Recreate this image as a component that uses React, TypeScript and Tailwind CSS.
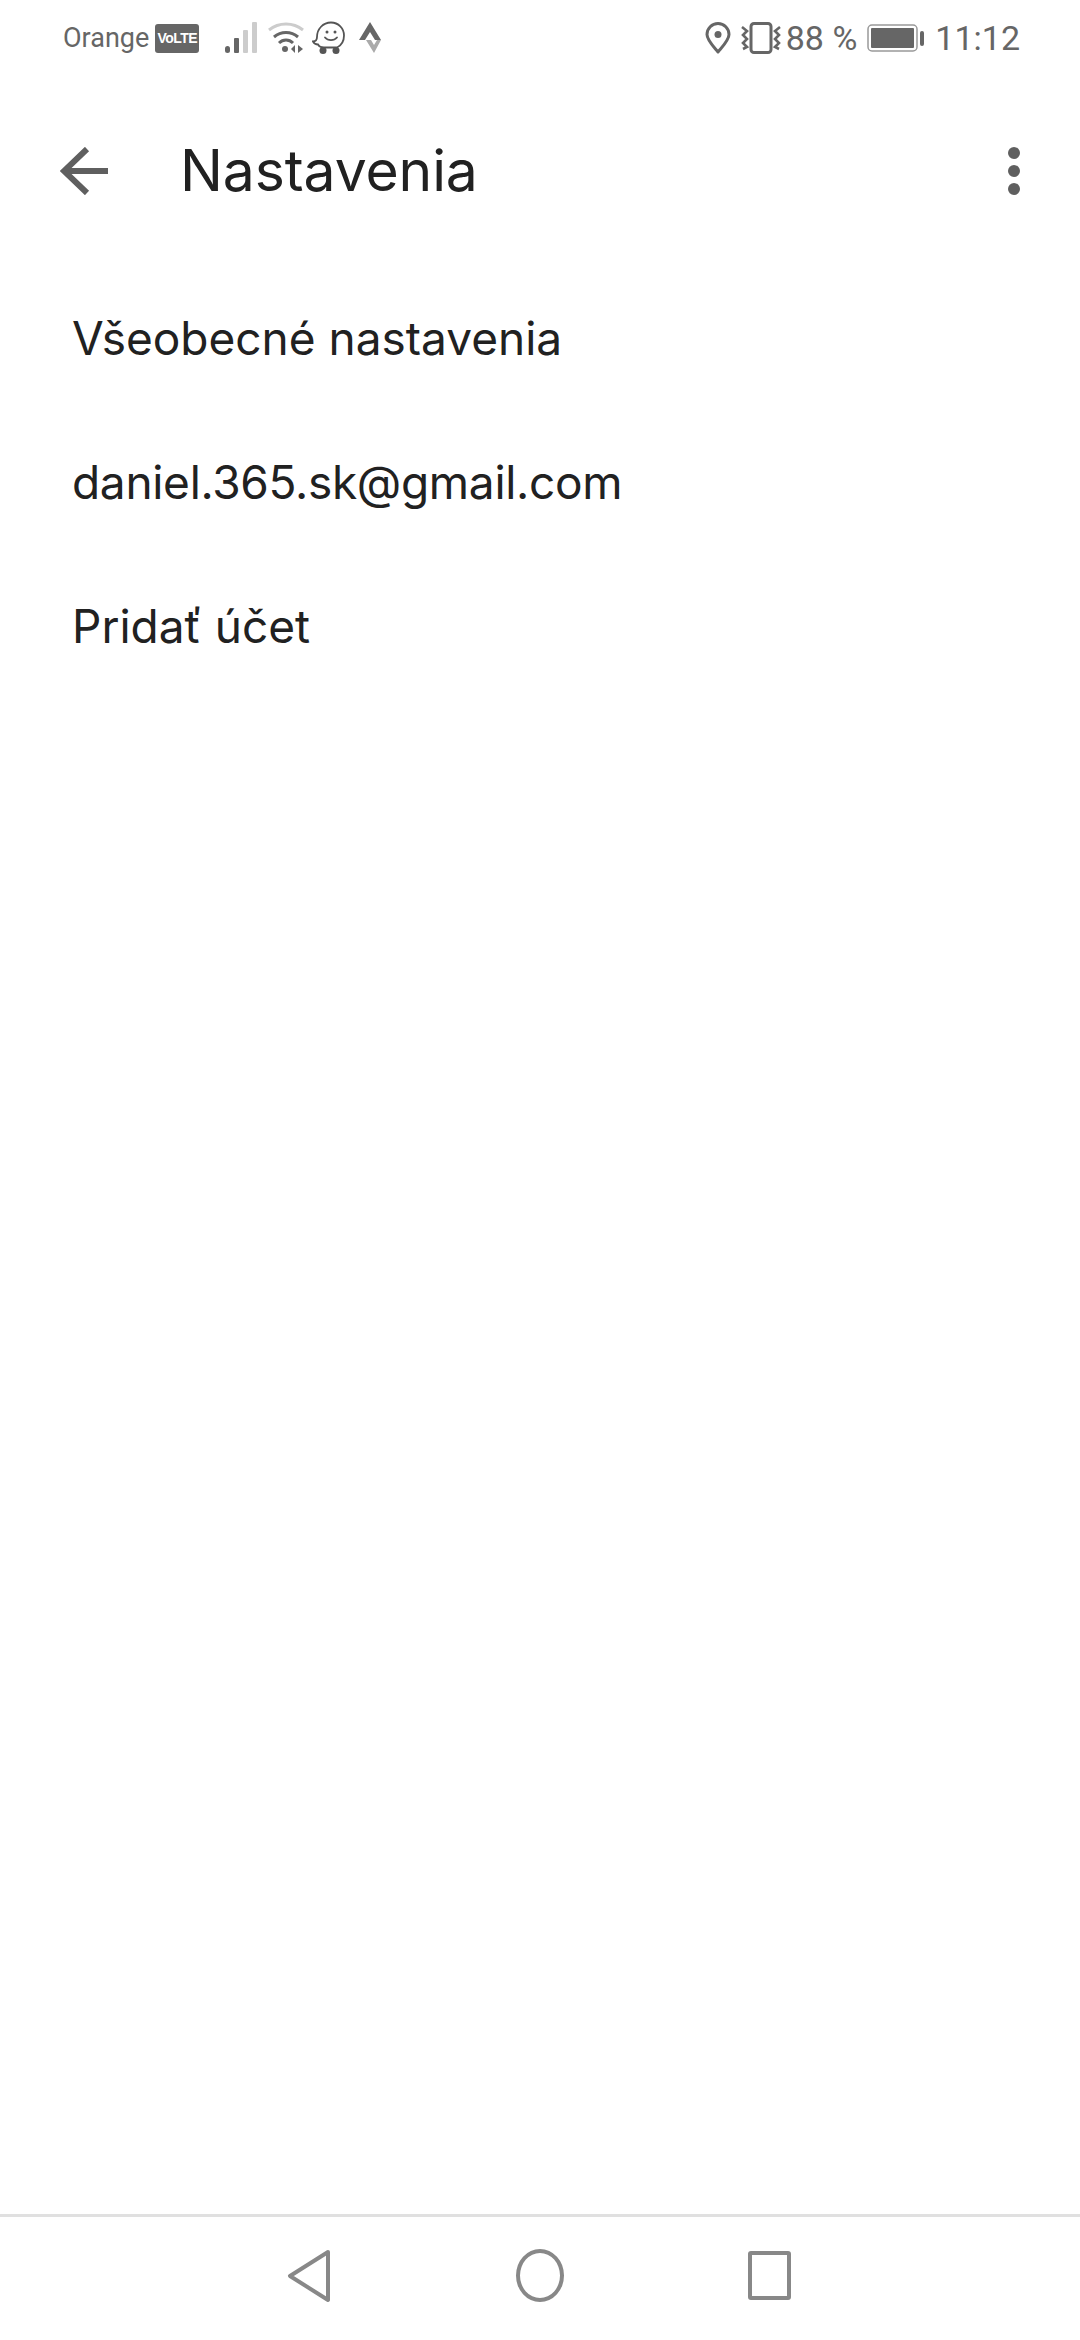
import React from "react";

const Signal = () => (
  <svg width="32" height="32" viewBox="0 0 32 32" className="block">
    <rect x="0" y="24" width="5" height="7" rx="2.5" fill="#666" />
    <rect x="9" y="16" width="5" height="15" rx="1" fill="#666" />
    <rect x="18" y="8" width="5" height="23" rx="1" fill="#ccc" />
    <rect x="27" y="0" width="5" height="31" rx="1" fill="#ccc" />
  </svg>
);

const Wifi = () => (
  <svg width="38" height="32" viewBox="0 0 38 32" className="block" fill="none">
    <path d="M2 8C12 0 26 0 36 8" stroke="#ccc" strokeWidth="3" />
    <path d="M7 15C14 9 24 9 31 15" stroke="#666" strokeWidth="3" />
    <path d="M12 21C16 17 22 17 26 21" stroke="#666" strokeWidth="3" />
    <circle cx="18" cy="27" r="3" fill="#666" />
    <path d="M24 27l4-4v8zM31 23l5 4-5 4z" fill="#666" />
  </svg>
);

const Waze = () => (
  <svg width="34" height="34" viewBox="0 0 34 34" className="block" fill="none">
    <path d="M5 16C5 8 11 1.500 19 1.500c7.500 0 13 6 13 13 0 6-3 10-7 12H12c-3 0-5-1-6-3-2 0-4-1-5-3 2.500 0 4-1 4-4.500z" stroke="#555" strokeWidth="1.800" />
    <circle cx="15" cy="11" r="1.500" fill="#555" />
    <circle cx="23" cy="11" r="1.500" fill="#555" />
    <path d="M13 16.500c3 3.500 9 3.500 12 0" stroke="#555" strokeWidth="1.800" strokeLinecap="round" />
    <circle cx="11" cy="29.500" r="3.500" fill="#555" />
    <circle cx="24" cy="29.500" r="3.500" fill="#555" />
  </svg>
);

const Strava = () => (
  <svg width="22" height="32" viewBox="0 0 22 32" className="block">
    <path d="M11 0l11 18h-6l-5-8-5 8H0z" fill="#666" />
    <path d="M7 18h5l3 5 3-5h4l-7 13z" fill="#aaa" />
  </svg>
);

const Pin = () => (
  <svg width="26" height="32" viewBox="0 0 26 32" className="block" fill="none">
    <path d="M13 30C8 24 2 18 2 12.500a11 11 0 0 1 22 0C24 18 18 24 13 30z" stroke="#666" strokeWidth="3" strokeLinejoin="round" />
    <circle cx="13" cy="12.500" r="3.500" fill="#666" />
  </svg>
);

const Vibrate = () => (
  <svg width="42" height="32" viewBox="0 0 42 32" className="block" fill="none" stroke="#666">
    <rect x="11" y="1.500" width="20" height="29" rx="3" strokeWidth="3" />
    <path d="M2 5l5 4-4 4 4 4-4 4 4 4-4 2" strokeWidth="2.600" />
    <path d="M40 5l-5 4 4 4-4 4 4 4-4 4 4 2" strokeWidth="2.600" />
  </svg>
);

const Battery = () => (
  <svg width="57" height="28" viewBox="0 0 57 28" className="block">
    <rect x="1" y="1" width="49" height="26" rx="4" fill="none" stroke="#999" strokeWidth="1.500" />
    <rect x="4" y="4" width="43" height="20" rx="1" fill="#666" />
    <rect x="53" y="7" width="4" height="15" rx="2" fill="#666" />
  </svg>
);

const ListRow = ({ children, tracking }: { children: React.ReactNode; tracking: string }) => (
  <div className={`flex h-[144px] items-center pl-[72px] font-['Inter',sans-serif] text-[46px] text-[#212121] ${tracking}`}>
    {children}
  </div>
);

export default function App() {
  return (
    <div className="flex h-[2340px] w-[1080px] flex-col overflow-hidden bg-white">
      <div className="flex h-[76px] items-center justify-between pl-[63px] pr-[60px] font-['Roboto',sans-serif] text-[#666]">
        <div className="flex items-center">
          <span className="text-[27px] leading-none">Orange</span>
          <span className="ml-[6px] flex h-[29px] w-[44px] items-center justify-center rounded-[3px] bg-[#666] font-['Liberation_Sans',sans-serif] text-[14px] font-bold leading-none tracking-[-0.5px] text-white">
            VoLTE
          </span>
          <span className="ml-[26px]"><Signal /></span>
          <span className="ml-[10px]"><Wifi /></span>
          <span className="ml-[7px]"><Waze /></span>
          <span className="ml-[13px]"><Strava /></span>
        </div>
        <div className="flex items-center">
          <Pin />
          <span className="ml-[9px]"><Vibrate /></span>
          <span className="ml-[4px] text-[34px] leading-none">88 %</span>
          <span className="ml-[10px]"><Battery /></span>
          <span className="ml-[11px] text-[34px] leading-none">11:12</span>
        </div>
      </div>

      <div className="flex h-[190px] items-center justify-between px-[60px]">
        <div className="flex items-center">
          <svg width="50" height="48" viewBox="0 0 50 48" className="block" fill="none" stroke="#5f5f5f" strokeWidth="6">
            <path d="M48 24H4M27 2L4 24l23 22" />
          </svg>
          <h1 className="mb-[2px] ml-[70px] font-['Inter',sans-serif] text-[57px] font-normal leading-none tracking-[-0.1px] text-[#212121]">
            Nastavenia
          </h1>
        </div>
        <div className="flex flex-col gap-[6px]">
          <span className="block h-[12px] w-[12px] rounded-full bg-[#5f5f5f]" />
          <span className="block h-[12px] w-[12px] rounded-full bg-[#5f5f5f]" />
          <span className="block h-[12px] w-[12px] rounded-full bg-[#5f5f5f]" />
        </div>
      </div>

      <div className="flex flex-col">
        <ListRow tracking="tracking-[0px]">Všeobecné nastavenia</ListRow>
        <ListRow tracking="tracking-[-0.3px]">daniel.365.sk@gmail.com</ListRow>
        <ListRow tracking="tracking-[0px]">Pridať účet</ListRow>
      </div>

      <div className="flex-1" />

      <div className="flex h-[126px] items-center border-t-[3px] border-[#e0e0e0] pb-[6px]">
        <div className="flex w-full items-center">
          <svg width="44" height="54" viewBox="0 0 44 54" className="ml-[287px] block" fill="none" stroke="#888" strokeWidth="4" strokeLinejoin="round">
            <path d="M41 3L3 27l38 24z" />
          </svg>
          <span className="ml-[185px] block h-[53px] w-[48px] rounded-[50%] border-[4px] border-[#888]" />
          <span className="ml-[184px] block h-[49px] w-[43px] rounded-[3px] border-[4px] border-[#888]" />
        </div>
      </div>
    </div>
  );
}
